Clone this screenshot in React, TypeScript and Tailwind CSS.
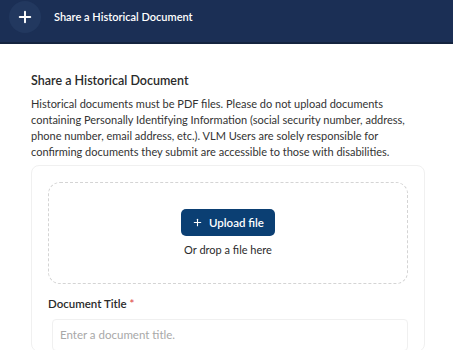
import { Plus } from 'lucide-react';

export default function App() {
  return (
    <div className="w-[453px] h-[350px] overflow-hidden bg-white text-[#2b2b2b]" style={{ fontFamily: 'Lato, "Noto Sans", sans-serif' }}>
      <header className="h-[44px] bg-[#1b2f55] border-b-2 border-[#14243f] flex items-start pt-[1px] pl-[9px] gap-[13px]">
        <div className="w-[32px] h-[32px] rounded-full bg-[#22385f] flex items-center justify-center">
          <Plus size={18} strokeWidth={2.6} className="text-white" />
        </div>
        <span className="mt-[8px] text-white text-[11px] leading-[16px] font-semibold">Share a Historical Document</span>
      </header>

      <main className="pl-[31px] pr-[28px] pt-[28px]">
        <h1 className="text-[12.5px] font-semibold text-[#2a2a2a] leading-[18px]">Share a Historical Document</h1>
        <p className="mt-[6px] text-[11px] leading-[16px] text-[#333]">
          Historical documents must be PDF files. Please do not upload documents containing Personally Identifying Information (social security number, address, phone number, email address, etc.). VLM Users are solely responsible for confirming documents they submit are accessible to those with disabilities.
        </p>

        <div className="mt-[5px] w-[394px] rounded-[8px] border border-[#f0f0f0] px-[16px] pt-[16px]">
          <div className="h-[102px] rounded-[12px] border border-dashed border-[#d4d4d4] flex flex-col items-center justify-center gap-[6px]">
            <button className="h-[27px] px-[11px] rounded-[5px] bg-[#0b3f73] text-white text-[11.5px] font-semibold flex items-center gap-[6px]">
              <Plus size={11} strokeWidth={2.4} />
              Upload file
            </button>
            <span className="text-[11px] leading-[15px] text-[#2b2b2b]">Or drop a file here</span>
          </div>

          <label className="mt-[12px] block text-[11.5px] leading-[15px] font-semibold text-[#2b2b2b]">
            Document Title <span className="text-[#e05252]">*</span>
          </label>
          <div className="mt-[8px] ml-[4px] h-[32px] rounded-[4px] border border-[#f0f0f0] flex items-center px-[7px]">
            <span className="text-[11.5px] text-[#a8a8a8]">Enter a document title.</span>
          </div>
        </div>
      </main>
    </div>
  );
}
